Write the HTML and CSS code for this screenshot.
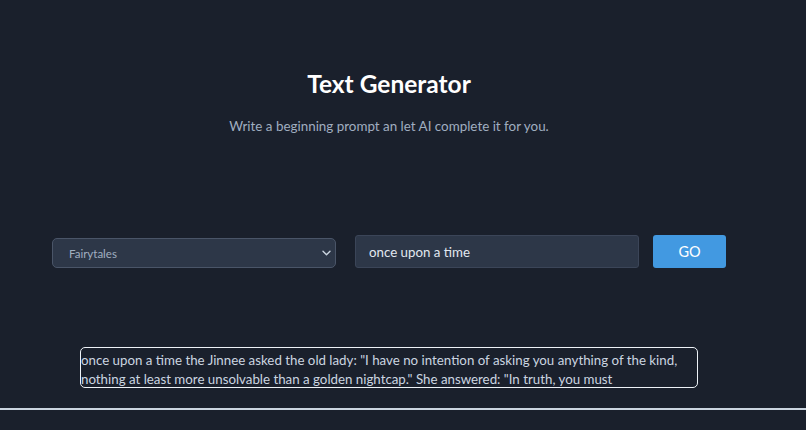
FILE: index.html
```html
<!DOCTYPE html>
<html lang="en">

<head>
    <meta charset="UTF-8">
    <meta name="viewport" content="width=device-width, initial-scale=1.0">
    <title>Text Generator</title>
    <link rel="stylesheet" href="styles.css">
</head>

<body>
    <div class="page">
        <header class="head">
            <h1>Text Generator</h1>
            <p>Write a beginning prompt an let AI complete it for you.</p>
        </header>
        <div class="ctrl">
            <div class="select_wrap">
                <select class="genre">
                    <option>Fairytales</option>
                    <option>Poems</option>
                    <option>News</option>
                </select>
                <svg class="arrow" width="9" height="6" viewBox="0 0 9 6">
                    <path d="M1 1.2l3.5 3.5 3.5-3.5" fill="none" stroke="#cbd5e0" stroke-width="1.4" stroke-linecap="round" stroke-linejoin="round" />
                </svg>
            </div>
            <input class="prompt" type="text" value="once upon a time">
            <button class="go">GO</button>
        </div>
        <div class="result">once upon a time the Jinnee asked the old lady: "I have no intention of asking you anything of the kind, nothing at least more unsolvable than a golden nightcap." She answered: "In truth, you must</div>
    </div>
    <hr class="line">
</body>

</html>
```

FILE: styles.css
```css
* {
    margin: 0;
    padding: 0;
    box-sizing: border-box;
}

body {
    background: #1a202c;
    font-family: Lato, "Noto Sans", sans-serif;
    color: #e2e8f0;
    overflow: hidden;
}

.page {
    width: 778px;
    display: flex;
    flex-direction: column;
    align-items: center;
}

.head {
    text-align: center;
    padding-top: 67px;
}

.head h1 {
    font-size: 24.5px;
    line-height: 34px;
    font-weight: 700;
    color: #ffffff;
}

.head p {
    margin-top: 15px;
    font-size: 13.4px;
    line-height: 20px;
    color: #a0aec0;
}

.ctrl {
    width: 674px;
    margin-top: 99px;
    display: flex;
    align-items: flex-end;
}

.select_wrap {
    position: relative;
    width: 284px;
    height: 30px;
    margin-right: 19px;
}

.genre {
    width: 100%;
    height: 100%;
    appearance: none;
    background: #2d3748;
    border: 1px solid #4a5568;
    border-radius: 5px;
    color: #a0aec0;
    font-family: inherit;
    font-size: 11.5px;
    padding-left: 16px;
    outline: none;
}

.arrow {
    position: absolute;
    right: 5px;
    top: 12px;
}

.prompt {
    width: 284px;
    height: 33px;
    margin-right: 14px;
    background: #2d3748;
    border: 1px solid #3b4558;
    border-radius: 3px;
    color: #e2e8f0;
    font-family: inherit;
    font-size: 13.3px;
    padding-left: 13px;
    outline: none;
}

.go {
    width: 73px;
    height: 33px;
    background: #4299e1;
    border: none;
    border-radius: 3px;
    color: #ffffff;
    font-family: inherit;
    font-size: 14.5px;
}

.result {
    width: 618px;
    height: 41px;
    margin-top: 79px;
    border: 1.5px solid #edf2f7;
    border-radius: 5px;
    font-size: 13.3px;
    line-height: 19px;
    padding-top: 3px;
    color: #cbd5e0;
    overflow: hidden;
}

.line {
    margin-top: 20px;
    border: none;
    height: 2px;
    background: #cbd5e0;
}
```
